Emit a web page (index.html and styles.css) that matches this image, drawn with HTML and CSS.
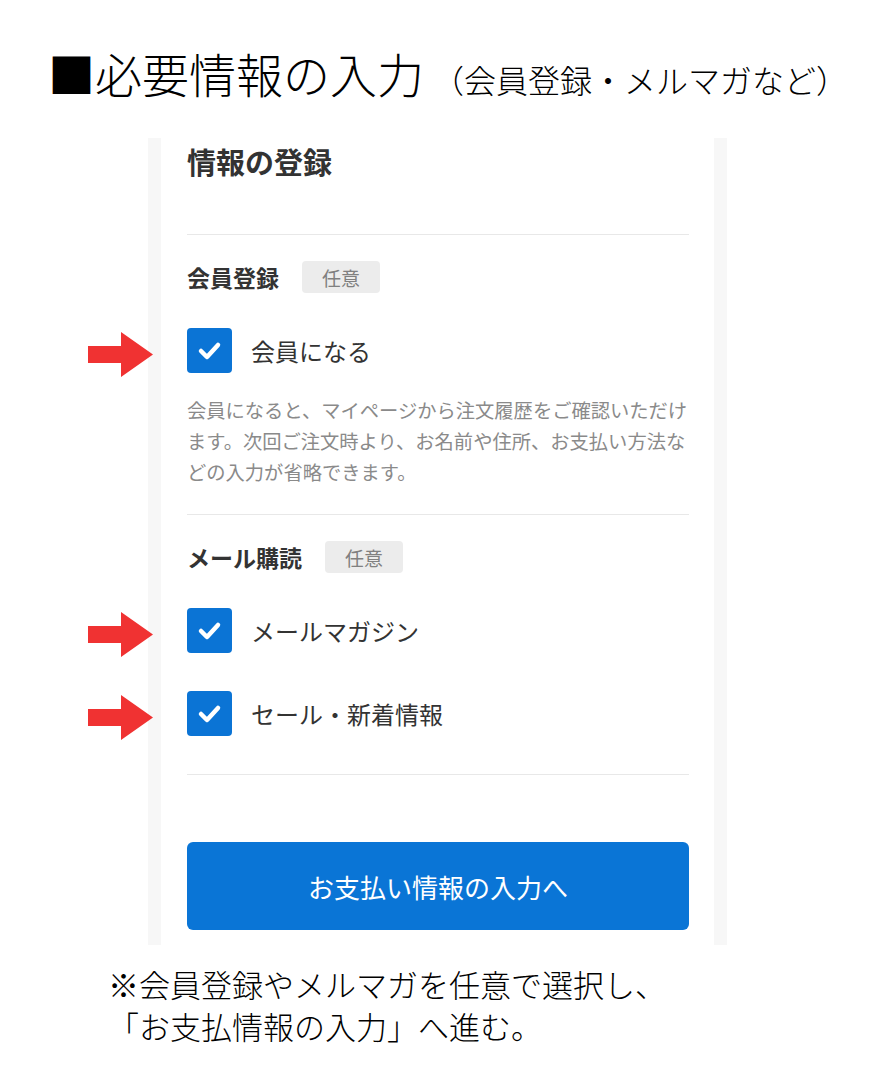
FILE: index.html
```html
<!DOCTYPE html>
<html lang="ja">
<head>
    <meta charset="UTF-8">
    <meta name="viewport" content="width=device-width, initial-scale=1.0">
    <title>必要情報の入力</title>
    <link rel="stylesheet" href="styles.css">
</head>
<body>
    <h1 class="page-title">■必要情報の入力<span class="sub">（会員登録・メルマガなど）</span></h1>

    <div class="card">
        <h2 class="card-title">情報の登録</h2>

        <div class="section">
            <div class="section-head">
                <span class="section-name">会員登録</span>
                <span class="badge">任意</span>
            </div>
            <div class="check-row">
                <svg class="arrow" width="65" height="45" viewBox="0 0 65 45"><path d="M0 14h33V0l32 22.5L33 45V31H0z" fill="#f03232"/></svg>
                <span class="checkbox"><svg width="45" height="45" viewBox="0 0 45 45"><path d="M14 23l6 6 11-12" fill="none" stroke="#fff" stroke-width="4.5" stroke-linecap="round" stroke-linejoin="round"/></svg></span>
                <span class="check-label">会員になる</span>
            </div>
            <p class="desc">会員になると、マイページから注文履歴をご確認いただけ<br>ます。次回ご注文時より、お名前や住所、お支払い方法な<br>どの入力が省略できます。</p>
        </div>

        <div class="section">
            <div class="section-head">
                <span class="section-name">メール購読</span>
                <span class="badge">任意</span>
            </div>
            <div class="check-row">
                <svg class="arrow" width="65" height="45" viewBox="0 0 65 45"><path d="M0 14h33V0l32 22.5L33 45V31H0z" fill="#f03232"/></svg>
                <span class="checkbox"><svg width="45" height="45" viewBox="0 0 45 45"><path d="M14 23l6 6 11-12" fill="none" stroke="#fff" stroke-width="4.5" stroke-linecap="round" stroke-linejoin="round"/></svg></span>
                <span class="check-label">メールマガジン</span>
            </div>
            <div class="check-row">
                <svg class="arrow" width="65" height="45" viewBox="0 0 65 45"><path d="M0 14h33V0l32 22.5L33 45V31H0z" fill="#f03232"/></svg>
                <span class="checkbox"><svg width="45" height="45" viewBox="0 0 45 45"><path d="M14 23l6 6 11-12" fill="none" stroke="#fff" stroke-width="4.5" stroke-linecap="round" stroke-linejoin="round"/></svg></span>
                <span class="check-label">セール・新着情報</span>
            </div>
        </div>

        <button class="next-btn">お支払い情報の入力へ</button>
    </div>

    <p class="note">※会員登録やメルマガを任意で選択し、<br>「お支払情報の入力」へ進む。</p>
</body>
</html>
```

FILE: styles.css
```css
body {
    margin: 0;
    background-color: #fff;
    color: #000;
    font-family: "Noto Sans CJK JP", "Noto Sans", sans-serif;
}
.page-title {
    margin: 45px 0 0 48px;
    font-size: 47px;
    font-weight: 300;
    line-height: 56px;
    white-space: nowrap;
}
.page-title .sub {
    margin-left: 8px;
    font-size: 32px;
}
.card {
    width: 502px;
    margin: 31px 0 0 148px;
    padding: 3px 25px 15px 26px;
    border-left: 13px solid #f7f7f7;
    border-right: 13px solid #f7f7f7;
}
.card-title {
    margin: 0;
    font-size: 29px;
    line-height: 40px;
    color: #333;
    font-weight: bold;
    padding-bottom: 53px;
    border-bottom: 1px solid #e8e8e8;
}
.section {
    padding: 25px 0 0;
    border-bottom: 1px solid #e8e8e8;
}
.section-head {
    display: flex;
    align-items: center;
    gap: 23px;
    margin-bottom: 34px;
}
.section-name {
    font-size: 23px;
    font-weight: bold;
    color: #333;
}
.badge {
    display: inline-flex;
    align-items: center;
    justify-content: center;
    width: 78px;
    height: 32px;
    background-color: #ececec;
    border-radius: 4px;
    color: #808080;
    font-size: 19px;
}
.check-row {
    position: relative;
    display: flex;
    align-items: center;
    gap: 19px;
    margin-bottom: 38px;
}
.arrow {
    position: absolute;
    left: -99px;
    top: 4px;
}
.checkbox {
    display: block;
    width: 45px;
    height: 45px;
    background-color: #0b74d5;
    border-radius: 4px;
}
.checkbox svg {
    display: block;
}
.check-label {
    font-size: 24px;
    color: #333;
}
.desc {
    margin: -16px 0 26px;
    font-size: 19.3px;
    line-height: 31px;
    color: #8a8a8a;
    white-space: nowrap;
}
.next-btn {
    display: block;
    width: 100%;
    height: 88px;
    margin-top: 67px;
    border: none;
    border-radius: 6px;
    background-color: #0a75d6;
    color: #fff;
    font-family: inherit;
    font-size: 26px;
}
.note {
    margin: 18px 0 0 108px;
    font-size: 31px;
    font-weight: 300;
    line-height: 42px;
}
```
